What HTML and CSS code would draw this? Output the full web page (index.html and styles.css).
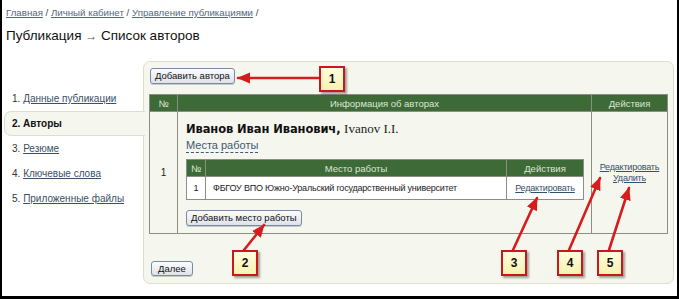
FILE: index.html
```html
<!DOCTYPE html>
<html lang="ru">
<head>
<meta charset="utf-8">
<title>Публикация — Список авторов</title>
<link rel="stylesheet" href="styles.css">
</head>
<body>
<div class="frame">
  <div class="crumbs">
    <a href="#">Главная</a> / <a href="#">Личный кабинет</a> / <a href="#">Управление публикациями</a> /
  </div>
  <h1 class="title">Публикация <span class="arrow">→</span> Список авторов</h1>

  <div class="layout">
    <ul class="steps">
      <li class="step">1. <a href="#">Данные публикации</a></li>
      <li class="step active">2. Авторы</li>
      <li class="step">3. <a href="#">Резюме</a></li>
      <li class="step">4. <a href="#">Ключевые слова</a></li>
      <li class="step">5. <a href="#">Приложенные файлы</a></li>
    </ul>

    <div class="panel">
      <button class="btn btn-add">Добавить автора</button>

      <table class="grid authors">
        <thead>
          <tr>
            <th class="c-num">№</th>
            <th>Информация об авторах</th>
            <th class="c-act">Действия</th>
          </tr>
        </thead>
        <tbody>
          <tr class="author-row">
            <td class="c-num">1</td>
            <td class="info">
              <div class="name"><b>Иванов Иван Иванович,</b> <span class="latin">Ivanov I.I.</span></div>
              <a href="#" class="dashed">Места работы</a>
              <table class="grid places">
                <thead>
                  <tr>
                    <th class="p-num">№</th>
                    <th>Место работы</th>
                    <th class="p-act">Действия</th>
                  </tr>
                </thead>
                <tbody>
                  <tr>
                    <td class="p-num">1</td>
                    <td class="p-name">ФБГОУ ВПО Южно-Уральский государственный университет</td>
                    <td class="p-act"><a href="#">Редактировать</a></td>
                  </tr>
                </tbody>
              </table>
              <button class="btn btn-place">Добавить место работы</button>
            </td>
            <td class="c-act actions">
              <a href="#">Редактировать</a><br>
              <a href="#">Удалить</a>
            </td>
          </tr>
        </tbody>
      </table>

      <button class="btn btn-next">Далее</button>
    </div>
  </div>

  <svg class="annot" width="679" height="299" viewBox="0 0 679 299" aria-hidden="true">
    <defs>
      <marker id="head" markerUnits="userSpaceOnUse" markerWidth="14" markerHeight="12" refX="12" refY="6" orient="auto">
        <path d="M0,0.5 L13,6 L0,11.5 Z" fill="#d51c1f"/>
      </marker>
    </defs>
    <g stroke="#d51c1f" stroke-width="2.6" stroke-linecap="round" marker-end="url(#head)">
      <line x1="319" y1="78" x2="238" y2="78"/>
      <line x1="244" y1="250" x2="264" y2="225"/>
      <line x1="513" y1="250" x2="537" y2="198"/>
      <line x1="569" y1="250" x2="600" y2="178"/>
      <line x1="609" y1="250" x2="629" y2="188"/>
    </g>
  </svg>
  <div class="callout c1">1</div>
  <div class="callout c2">2</div>
  <div class="callout c3">3</div>
  <div class="callout c4">4</div>
  <div class="callout c5">5</div>
</div>
</body>
</html>
```

FILE: styles.css
```css
* { box-sizing: border-box; }

html, body {
  margin: 0;
  padding: 0;
  background: #fff;
}

.frame {
  position: relative;
  width: 679px;
  height: 299px;
  border-left: 2px solid #000;
  border-right: 2px solid #000;
  border-bottom: 3px solid #000;
  font-family: "Liberation Sans", Arial, sans-serif;
  font-size: 10px;
  color: #222;
  overflow: hidden;
}

a { color: #33506d; }

.crumbs {
  padding: 6px 0 0 4px;
  line-height: 14px;
  font-size: 9.7px;
  color: #444;
}
.crumbs a { color: #55687a; }

.title {
  margin: 7px 0 0 4px;
  font-size: 13.5px;
  line-height: 18px;
  font-weight: normal;
  color: #111;
}
.title .arrow { color: #555; font-size: 12px; }

.layout {
  display: flex;
  margin-top: 16px;
  margin-right: 3px;
}

.steps {
  list-style: none;
  margin: 0;
  padding: 25px 0 0 0;
  width: 143px;
  flex-shrink: 0;
}
.step {
  height: 25px;
  line-height: 23px;
  margin-left: 2px;
  padding-left: 7px;
  border: 1px solid transparent;
  border-right: none;
  color: #333;
  font-size: 10px;
}
.step a { color: #3a5068; }
.step.active {
  position: relative;
  z-index: 1;
  background: #f5f6ee;
  border-color: #dcdfca;
  border-radius: 7px 0 0 7px;
  font-weight: bold;
  color: #111;
}

.panel {
  flex: 1;
  margin-left: -2px;
  height: 223px;
  background: #f5f6ee;
  border: 1px solid #dcdfca;
  border-radius: 7px;
  padding: 6px 5px 8px 5px;
}

.btn {
  display: block;
  white-space: nowrap;
  font-family: "Liberation Sans", Arial, sans-serif;
  font-size: 9.5px;
  color: #111;
  height: 16px;
  line-height: 14px;
  padding: 0 4px;
  border: 1px solid #7b8aa3;
  border-radius: 3px;
  background: linear-gradient(#fbfcfe, #dfe2ea);
  box-shadow: 0 1px 0 #c8cbc0;
}
.btn-add { margin-left: 1px; }
.btn-place { margin-top: 10px; }
.btn-next { margin-top: 27px; margin-left: 2px; height: 15px; padding: 0 6px; }

.grid {
  border-collapse: collapse;
  width: 100%;
}
.grid th {
  background: #3e6a37;
  color: #dce6d6;
  font-weight: normal;
  font-size: 9.5px;
  height: 17px;
  padding: 0;
  border: 1px solid #8c8e84;
}
.grid td {
  border: 1px solid #8c8e84;
  padding: 0;
}

.authors { margin-top: 10px; }
.authors .c-num { width: 28px; text-align: center; }
.authors .c-act { width: 76px; text-align: center; }
.author-row > td { height: 122px; vertical-align: middle; }
.author-row > td.info {
  vertical-align: top;
  padding: 9px 7px 7px 8px;
}

.name {
  font-family: "DejaVu Sans", Verdana, sans-serif;
  font-size: 11.5px;
  line-height: 16px;
  color: #111;
}
.name b { letter-spacing: -0.1px; }
.latin {
  font-family: "Liberation Serif", "Times New Roman", serif;
  font-size: 13px;
  color: #222;
}

.dashed {
  display: inline-block;
  font-size: 11px;
  color: #3c5876;
  text-decoration: none;
  border-bottom: 1px dashed #3c5876;
  line-height: 14px;
  margin-top: 1px;
}

.places { margin-top: 6px; }
.places th { height: 17px; }
.places td {
  background: #fff;
  height: 23px;
  font-size: 9px;
  letter-spacing: -0.2px;
  vertical-align: middle;
}
.places .p-num { width: 19px; text-align: center; }
.places .p-name { padding-left: 7px; }
.places .p-act { width: 77px; text-align: center; }

.actions { font-size: 9px; letter-spacing: -0.2px; line-height: 11px; }

.annot {
  position: absolute;
  left: -2px;
  top: 0;
  pointer-events: none;
}

.callout {
  position: absolute;
  top: 250px;
  width: 26px;
  height: 26px;
  border: 2px solid #c8181c;
  background: linear-gradient(#fffde0, #f7f2b0);
  box-shadow: 2px 2px 2px rgba(0, 0, 0, 0.35);
  font-weight: bold;
  font-size: 12px;
  line-height: 22px;
  text-align: center;
  color: #111;
}
.c1 { left: 317px; top: 66px; }
.c2 { left: 230px; }
.c3 { left: 499px; }
.c4 { left: 555px; }
.c5 { left: 595px; }
```
